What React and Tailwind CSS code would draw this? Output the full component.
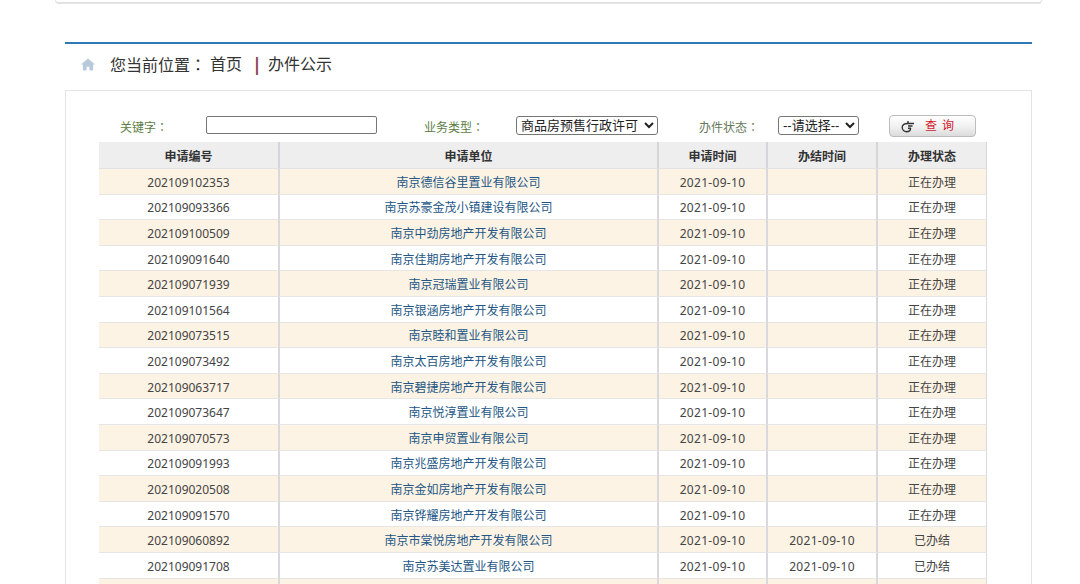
const rows = [
  ['202109102353', '南京德信谷里置业有限公司', '2021-09-10', '', '正在办理'],
  ['202109093366', '南京苏豪金茂小镇建设有限公司', '2021-09-10', '', '正在办理'],
  ['202109100509', '南京中劲房地产开发有限公司', '2021-09-10', '', '正在办理'],
  ['202109091640', '南京佳期房地产开发有限公司', '2021-09-10', '', '正在办理'],
  ['202109071939', '南京冠瑞置业有限公司', '2021-09-10', '', '正在办理'],
  ['202109101564', '南京银涵房地产开发有限公司', '2021-09-10', '', '正在办理'],
  ['202109073515', '南京睦和置业有限公司', '2021-09-10', '', '正在办理'],
  ['202109073492', '南京太百房地产开发有限公司', '2021-09-10', '', '正在办理'],
  ['202109063717', '南京碧捷房地产开发有限公司', '2021-09-10', '', '正在办理'],
  ['202109073647', '南京悦淳置业有限公司', '2021-09-10', '', '正在办理'],
  ['202109070573', '南京申贸置业有限公司', '2021-09-10', '', '正在办理'],
  ['202109091993', '南京兆盛房地产开发有限公司', '2021-09-10', '', '正在办理'],
  ['202109020508', '南京金如房地产开发有限公司', '2021-09-10', '', '正在办理'],
  ['202109091570', '南京铧耀房地产开发有限公司', '2021-09-10', '', '正在办理'],
  ['202109060892', '南京市棠悦房地产开发有限公司', '2021-09-10', '2021-09-10', '已办结'],
  ['202109091708', '南京苏美达置业有限公司', '2021-09-10', '2021-09-10', '已办结'],
  ['', '', '', '', ''],
];

const headers = ['申请编号', '申请单位', '申请时间', '办结时间', '办理状态'];

const HomeIcon = () => (
  <svg width="14" height="13" viewBox="0 0 15 13" className="text-[#b9c9dc]">
    <path fill="currentColor" d="M7.5 0 15 6.6h-2V13H9V8.8H6V13H2V6.6H0z" />
  </svg>
);

const HandIcon = () => (
  <svg width="14" height="14" viewBox="0 0 14 14" fill="none" stroke="#333" strokeWidth="1.4">
    <path d="M13 4.5H6.5C3.8 4.5 1.2 5.5 1.2 8.2c0 2.6 2.1 4.5 4.5 4.5 2 0 3.7-1.2 4-3.4" />
    <path d="M7 4.5V2M7 7h4.5M7 9.3h3" />
  </svg>
);

// TC face draws the full-width colon centred, as the original does
const Colon = () => <span className="font-['Noto_Sans_CJK_TC',sans-serif]">：</span>;

export default function App() {
  return (
    <div className="h-[584px] overflow-hidden bg-white font-['Noto_Sans','Noto_Sans_CJK_SC',sans-serif] text-xs text-[#333]">
      {/* top card edge */}
      <div className="ml-[55px] h-[4px] w-[987px] rounded-b-md border-x border-b-2 border-[#e2e2e2]" />

      <div className="mt-[38px] ml-[65px] w-[967px] border-t-2 border-[#2f78b8]">
        {/* breadcrumb */}
        <div className="flex h-[46px] items-center pb-[6px] pl-[16px] text-base">
          <HomeIcon />
          <span className="ml-[15px]">您当前位置<Colon /></span>
          <span className="ml-[4px]">首页</span>
          <span className="ml-[10px] text-[18px] font-bold text-[#8a4a58]">|</span>
          <span className="ml-[6px]">办件公示</span>
        </div>

        <div className="border border-[#e4e4e4] pt-[25px] pb-[40px] pl-[33px]">
          {/* search row */}
          <div className="flex h-[26px] items-start">
            <span className="mt-[3px] ml-[21px] w-[86px] text-[#5d7d45]">关键字<Colon /></span>
            <input className="h-[18px] w-[171px] rounded-[2px] border border-[#767676] bg-white" />
            <span className="mt-[3px] ml-[47px] w-[92px] text-[#5d7d45]">业务类型<Colon /></span>
            <select className="h-[19px] w-[142px] rounded-[3px] border border-[#767676] font-['Liberation_Sans','Noto_Sans_CJK_SC',sans-serif] text-[13px] text-[#222]">
              <option>商品房预售行政许可</option>
            </select>
            <span className="mt-[3px] ml-[41px] w-[79px] text-[#66785a]">办件状态<Colon /></span>
            <select className="h-[19px] w-[81px] rounded-[3px] border border-[#767676] font-['Liberation_Sans','Noto_Sans_CJK_SC',sans-serif] text-[13px] text-[#222]">
              <option>--请选择--</option>
            </select>
            <button className="-mt-[1px] ml-[30px] flex h-[22px] w-[87px] items-center justify-center gap-[10px] rounded-[4px] border border-[#bdbdbd] bg-gradient-to-b from-white via-[#f2f2f2] to-[#dcdcdc] pr-[5px] text-[#d0202c]">
              <HandIcon />
              <span className="tracking-[5px]">查询</span>
            </button>
          </div>

          {/* list */}
          <table className="w-[888px] table-fixed border-separate border-spacing-0">
            <colgroup>
              <col className="w-[181px]" />
              <col className="w-[379px]" />
              <col className="w-[109px]" />
              <col className="w-[110px]" />
              <col className="w-[109px]" />
            </colgroup>
            <thead>
              <tr>
                {headers.map((h, i) => (
                  <th
                    key={h}
                    className={`h-[27px] border-b border-[#e2e2e2] border-r-[#d6d6da] bg-[#eeeeef] pt-[3px] text-center font-bold text-[#333] ${i < 4 ? 'border-r-2' : 'border-r'}`}
                  >
                    {h}
                  </th>
                ))}
              </tr>
            </thead>
            <tbody>
              {rows.map((row, r) => (
                <tr key={r} className={r % 2 === 0 ? 'bg-[#fdf3e4]' : 'bg-white'}>
                  {row.map((cell, i) => (
                    <td
                      key={i}
                      className={`h-[25.6px] border-b border-[#e6e6e6] border-r-[#d9d9dd] p-0 pt-[3px] text-center ${i < 4 ? 'border-r-2' : 'border-r'} ${i === 1 ? 'text-[#235684]' : 'text-[#444]'} ${i === 2 || i === 3 ? 'tracking-[0.3px]' : ''}`}
                    >
                      {cell}
                    </td>
                  ))}
                </tr>
              ))}
            </tbody>
          </table>
        </div>
      </div>
    </div>
  );
}
